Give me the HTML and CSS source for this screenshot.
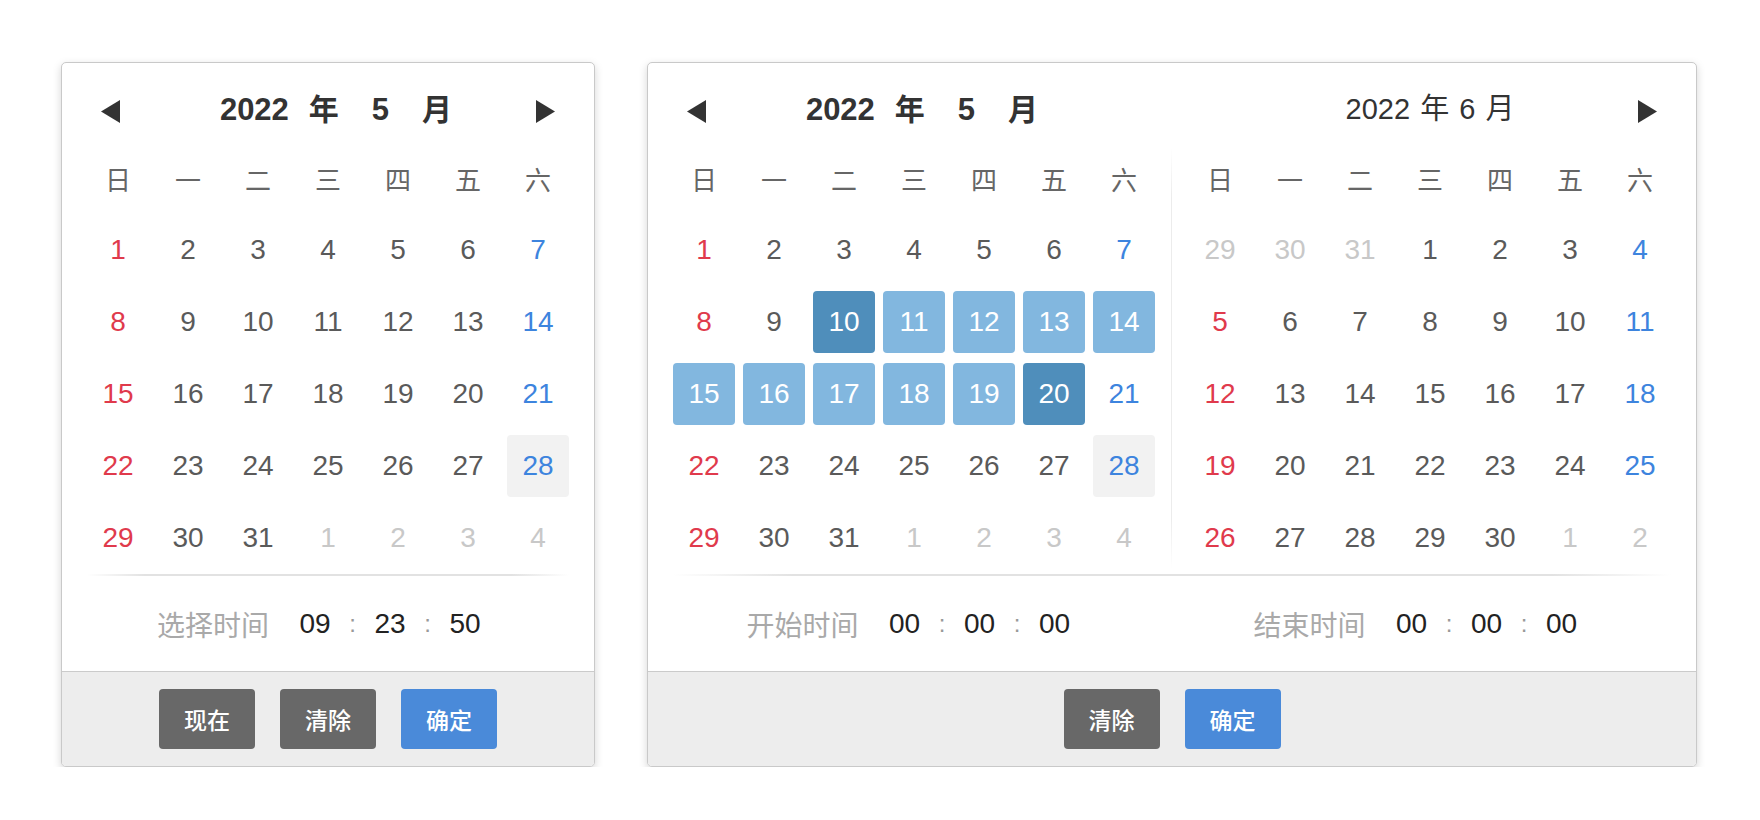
FILE: index.html
```html
<!DOCTYPE html>
<html lang="zh-CN">
<head>
    <meta charset="UTF-8">
    <meta name="viewport" content="width=device-width, initial-scale=1.0">
    <link rel="stylesheet" href="styles.css">
</head>
<body>

<!-- single date + time -->
<div class="picker">
    <div class="main">
        <div class="month">
            <div class="head">
                <svg class="arrow" viewBox="0 0 19 23"><polygon points="19,0 19,23 0,11.5"/></svg>
                <div class="title bold"><span>2022</span><span class="y">年</span><span class="m">5</span><span class="mm">月</span></div>
                <svg class="arrow" viewBox="0 0 19 23"><polygon points="0,0 0,23 19,11.5"/></svg>
            </div>
            <div class="grid">
                <span class="wk">日</span><span class="wk">一</span><span class="wk">二</span><span class="wk">三</span><span class="wk">四</span><span class="wk">五</span><span class="wk">六</span>
                <span class="sun">1</span><span>2</span><span>3</span><span>4</span><span>5</span><span>6</span><span class="sat">7</span>
                <span class="sun">8</span><span>9</span><span>10</span><span>11</span><span>12</span><span>13</span><span class="sat">14</span>
                <span class="sun">15</span><span>16</span><span>17</span><span>18</span><span>19</span><span>20</span><span class="sat">21</span>
                <span class="sun">22</span><span>23</span><span>24</span><span>25</span><span>26</span><span>27</span><span class="sat hover">28</span>
                <span class="sun">29</span><span>30</span><span>31</span><span class="muted">1</span><span class="muted">2</span><span class="muted">3</span><span class="muted">4</span>
            </div>
        </div>
        <div class="sep"></div>
        <div class="time-row">
            <div class="time narrow">
                <span class="label">选择时间</span>
                <span class="val">09</span><span class="colon">:</span><span class="val">23</span><span class="colon">:</span><span class="val">50</span>
            </div>
        </div>
    </div>
    <div class="foot">
        <button class="btn">现在</button>
        <button class="btn">清除</button>
        <button class="btn primary">确定</button>
    </div>
</div>

<!-- range -->
<div class="picker">
    <div class="main">
        <div class="months">
            <div class="month">
                <div class="head">
                    <svg class="arrow" viewBox="0 0 19 23"><polygon points="19,0 19,23 0,11.5"/></svg>
                    <div class="title bold"><span>2022</span><span class="y">年</span><span class="m">5</span><span class="mm">月</span></div>
                    <span class="arrow"></span>
                </div>
                <div class="grid">
                    <span class="wk">日</span><span class="wk">一</span><span class="wk">二</span><span class="wk">三</span><span class="wk">四</span><span class="wk">五</span><span class="wk">六</span>
                    <span class="sun">1</span><span>2</span><span>3</span><span>4</span><span>5</span><span>6</span><span class="sat">7</span>
                    <span class="sun">8</span><span>9</span><span class="edge">10</span><span class="range">11</span><span class="range">12</span><span class="range">13</span><span class="range">14</span>
                    <span class="range">15</span><span class="range">16</span><span class="range">17</span><span class="range">18</span><span class="range">19</span><span class="edge">20</span><span class="sat">21</span>
                    <span class="sun">22</span><span>23</span><span>24</span><span>25</span><span>26</span><span>27</span><span class="sat hover">28</span>
                    <span class="sun">29</span><span>30</span><span>31</span><span class="muted">1</span><span class="muted">2</span><span class="muted">3</span><span class="muted">4</span>
                </div>
            </div>
            <div class="divider"></div>
            <div class="month">
                <div class="head">
                    <span class="arrow"></span>
                    <div class="title">2022 年 6 月</div>
                    <svg class="arrow" viewBox="0 0 19 23"><polygon points="0,0 0,23 19,11.5"/></svg>
                </div>
                <div class="grid">
                    <span class="wk">日</span><span class="wk">一</span><span class="wk">二</span><span class="wk">三</span><span class="wk">四</span><span class="wk">五</span><span class="wk">六</span>
                    <span class="muted">29</span><span class="muted">30</span><span class="muted">31</span><span>1</span><span>2</span><span>3</span><span class="sat">4</span>
                    <span class="sun">5</span><span>6</span><span>7</span><span>8</span><span>9</span><span>10</span><span class="sat">11</span>
                    <span class="sun">12</span><span>13</span><span>14</span><span>15</span><span>16</span><span>17</span><span class="sat">18</span>
                    <span class="sun">19</span><span>20</span><span>21</span><span>22</span><span>23</span><span>24</span><span class="sat">25</span>
                    <span class="sun">26</span><span>27</span><span>28</span><span>29</span><span>30</span><span class="muted">1</span><span class="muted">2</span>
                </div>
            </div>
        </div>
        <div class="sep"></div>
        <div class="time-row">
            <div class="time start">
                <span class="label">开始时间</span>
                <span class="val">00</span><span class="colon">:</span><span class="val">00</span><span class="colon">:</span><span class="val">00</span>
            </div>
            <div class="gap"></div>
            <div class="time end">
                <span class="label">结束时间</span>
                <span class="val">00</span><span class="colon">:</span><span class="val">00</span><span class="colon">:</span><span class="val">00</span>
            </div>
        </div>
    </div>
    <div class="foot">
        <button class="btn">清除</button>
        <button class="btn primary">确定</button>
    </div>
</div>

</body>
</html>
```

FILE: styles.css
```css
body {
    margin: 0;
    padding: 62px 0 0 61px;
    display: flex;
    align-items: flex-start;
    gap: 52px;
    background: #fff;
    font-family: "Liberation Sans", "Noto Sans CJK SC", sans-serif;
}

.picker {
    background: #fff;
    border: 1px solid #c9c9c9;
    border-radius: 5px;
    box-shadow: 0 3px 8px rgba(0, 0, 0, 0.17);
    overflow: hidden;
}

.main {
    padding: 22px 25px 0;
}

.months {
    display: flex;
}

.month {
    width: 482px;
}

.divider {
    width: 1px;
    margin: 62px 17px 0 16px;
    background: linear-gradient(to bottom, rgba(235, 235, 235, 0), #ececec 12%, #ececec 88%, rgba(235, 235, 235, 0));
}

.head {
    height: 52px;
    margin-bottom: 10px;
    padding: 0 14px;
    display: flex;
    align-items: center;
}

.arrow {
    width: 19px;
    height: 23px;
    flex: none;
    fill: #333;
}

.title {
    flex: 1;
    text-align: center;
    font-size: 29px;
    word-spacing: 2px;
    line-height: 1;
    padding-bottom: 4px;
    color: #333;
}

.title.bold {
    display: flex;
    justify-content: center;
    align-items: baseline;
    font-size: 31px;
    font-weight: bold;
    padding-left: 16px;
}

.title .y { margin-left: 20px; font-size: 30px; }
.title .m { margin-left: 33px; }
.title .mm { margin-left: 33px; font-size: 30px; }

.grid {
    display: grid;
    grid-template-columns: repeat(7, 62px);
    grid-auto-rows: 62px;
    gap: 10px 8px;
}

.grid span {
    display: flex;
    align-items: center;
    justify-content: center;
    font-size: 28px;
    color: #5a5a5a;
    border-radius: 4px;
}

.grid .wk {
    font-family: "Noto Sans CJK SC", sans-serif;
    font-size: 26px;
    color: #666;
}

.grid .sun { color: #e03a4c; }
.grid .sat { color: #3d84de; }
.grid .muted { color: #c8c8c8; }
.grid .hover { background: #f2f2f2; }
.grid .range { background: #82b7df; color: #fff; }
.grid .edge { background: #4f8ebb; color: #fff; }

.sep {
    height: 2px;
    margin-top: 5px;
    background: linear-gradient(to right, rgba(226, 226, 226, 0), #e2e2e2 12%, #e2e2e2 88%, rgba(226, 226, 226, 0));
}

.time-row {
    height: 95px;
    display: flex;
}

.time {
    width: 482px;
    box-sizing: border-box;
    display: flex;
    align-items: center;
    justify-content: center;
}

.time.narrow { padding-right: 12px; }
.time.start { padding-right: 5px; }
.time.end { padding-right: 23px; }

.gap {
    width: 34px;
}

.label {
    margin-right: 24px;
    font-family: "Noto Sans CJK SC", sans-serif;
    font-size: 28px;
    color: #a9a9a9;
}

.val {
    width: 44px;
    text-align: center;
    font-size: 28px;
    color: #222;
}

.colon {
    width: 31px;
    text-align: center;
    font-size: 24px;
    color: #999;
}

.foot {
    height: 94px;
    background: #ededed;
    border-top: 1px solid #cbcbcb;
    display: flex;
    align-items: center;
    justify-content: center;
    gap: 25px;
}

.btn {
    width: 96px;
    height: 60px;
    border: none;
    border-radius: 4px;
    background: #686868;
    color: #fff;
    font-family: "Noto Sans CJK SC", sans-serif;
    font-size: 23px;
    font-weight: 500;
    cursor: pointer;
}

.btn.primary {
    background: #4a8ad9;
}
```
